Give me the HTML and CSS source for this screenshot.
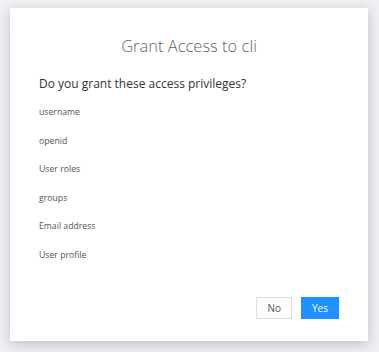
FILE: index.html
```html
<!DOCTYPE html>
<html lang="en">
<head>
    <meta charset="UTF-8">
    <meta name="viewport" content="width=device-width, initial-scale=1.0">
    <title>Grant Access to cli</title>
    <link rel="stylesheet" href="styles.css">
</head>
<body>
    <div class="card">
        <h1 class="title">Grant Access to cli</h1>

        <form id="grantForm">
            <h2 class="question">Do you grant these access privileges?</h2>

            <ul class="scopes">
                <li>username</li>
                <li>openid</li>
                <li>User roles</li>
                <li>groups</li>
                <li>Email address</li>
                <li>User profile</li>
            </ul>

            <div class="actions">
                <button type="button" class="btn btn-no">No</button>
                <button type="submit" class="btn btn-yes">Yes</button>
            </div>
        </form>
    </div>
</body>
</html>
```

FILE: styles.css
```css
html, body {
    height: 100%;
}
body {
    margin: 0;
    padding: 8px 11px 11px 10px;
    box-sizing: border-box;
    background-color: #eef0f3;
    font-family: "Open Sans", Arial, sans-serif;
}
.card {
    background: #fff;
    height: 333px;
    box-sizing: border-box;
    padding: 27px 29px 0 29px;
    box-shadow: 0 3px 12px rgba(0, 0, 0, 0.2);
}
.title {
    margin: 0;
    text-align: center;
    font-size: 16.5px;
    font-weight: 300;
    color: #666;
    line-height: 22px;
}
.question {
    margin: 18px 0 0 0;
    font-size: 12px;
    font-weight: 400;
    color: #333;
    line-height: 18px;
}
.scopes {
    list-style: none;
    margin: 13px 0 0 0;
    padding: 0;
}
.scopes li {
    font-size: 8.7px;
    color: #555;
    line-height: 12px;
    margin-bottom: 16.6px;
}
.actions {
    display: flex;
    justify-content: flex-end;
    gap: 9px;
    margin-top: 36px;
}
.btn {
    height: 22px;
    padding: 0 10px;
    font-family: inherit;
    font-size: 10px;
    border-radius: 0;
    cursor: pointer;
}
.btn-no {
    background: #fff;
    color: #555;
    border: 1px solid #ddd;
}
.btn-yes {
    background: #1e90ff;
    color: #fff;
    border: 1px solid #1e90ff;
}
```
